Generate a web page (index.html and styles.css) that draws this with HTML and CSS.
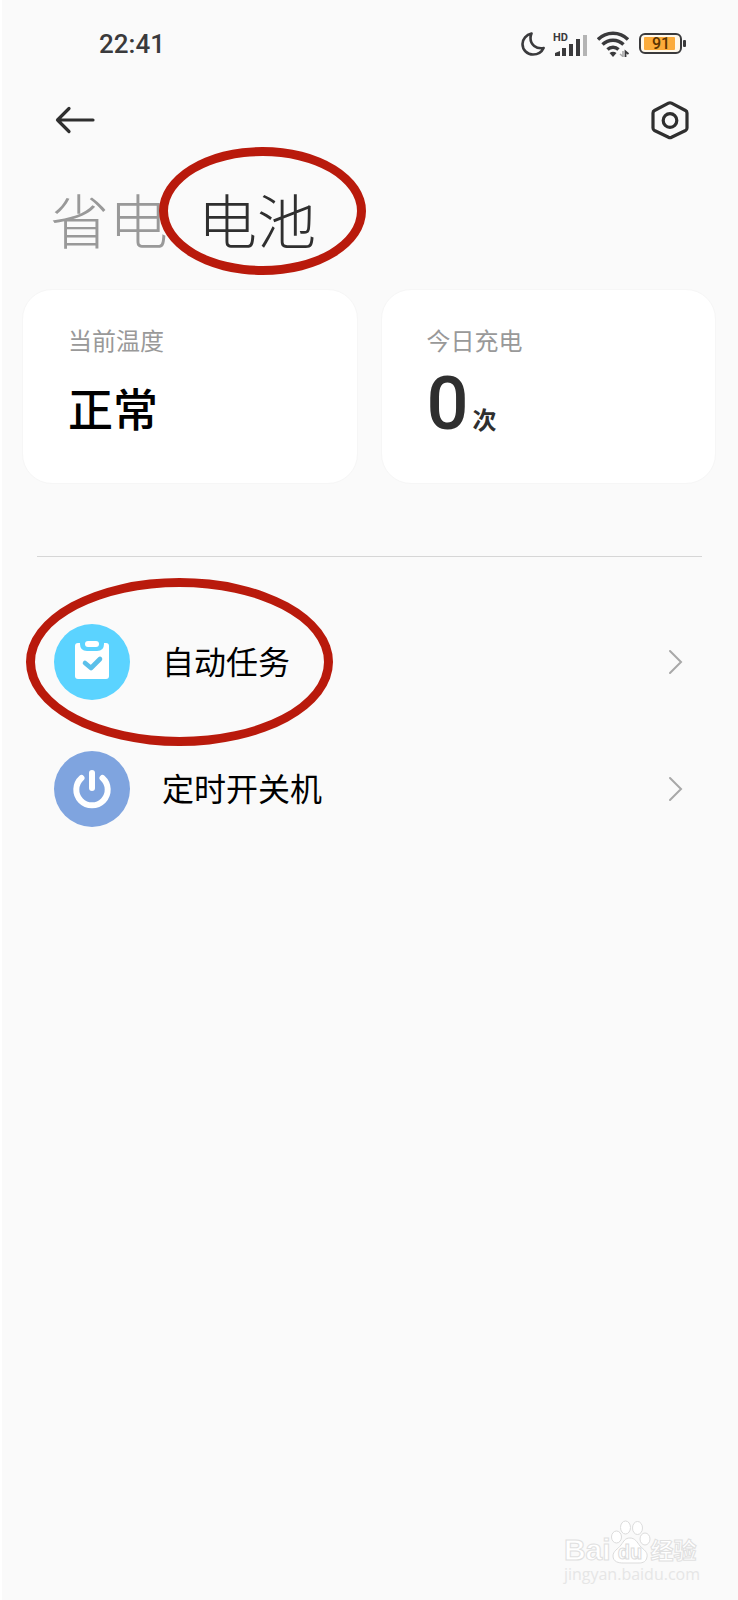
FILE: index.html
```html
<!DOCTYPE html>
<html lang="zh-CN">
<head>
  <meta charset="UTF-8">
  <meta name="viewport" content="width=device-width, initial-scale=1.0">
  <title>电池</title>
  <link rel="stylesheet" href="styles.css">
</head>
<body>

  <div class="page">
    <!-- Status Bar -->
    <div class="status-bar">
      <span class="time">22:41</span>
      <div class="status-icons">
        <svg width="24" height="26" viewBox="0 0 24 26" fill="none" stroke="#3a3a3c" stroke-width="2.6" stroke-linejoin="round">
          <path d="M10.500 2.500C5.300 3.600 1.500 8 1.500 13c0 6 4.700 10.500 10.500 10.500 4.700 0 8.700-2.300 10.600-6.500-7.600 1.300-13.100-3.500-13.100-10 0-1.600.4-3.100 1-4.500z"/>
        </svg>
        <svg width="36" height="30" viewBox="0 -2 36 30">
          <text class="hd" x="0" y="10">HD</text>
          <g fill="#3a3a3c">
            <path d="M2 25v-3l5-2v5z"/>
            <rect x="9" y="17" width="4" height="8"/>
            <rect x="16" y="13" width="4" height="12"/>
            <rect x="23" y="8" width="4" height="17"/>
          </g>
          <rect x="30" y="4" width="4" height="21" fill="#b4b4b4"/>
        </svg>
        <svg width="34" height="26" viewBox="0 0 34 26">
          <g fill="none" stroke="#3a3a3c" stroke-width="3.400">
            <path d="M1 8.500a21 21 0 0 1 30 0"/>
            <path d="M5.500 13.500a15 15 0 0 1 21 0"/>
            <path d="M10.500 18.500a8 8 0 0 1 11 0"/>
          </g>
          <path d="M12.500 22q3.500-2.400 7 0l-3.500 4z" fill="#3a3a3c"/>
          <path d="M26 20v5.500l-3-2.500" fill="none" stroke="#aaa" stroke-width="1.600"/>
          <path d="M28.500 26v-5.500l3 2.500" fill="none" stroke="#3a3a3c" stroke-width="1.800"/>
        </svg>
        <svg width="48" height="24" viewBox="0 0 48 24">
          <rect x="1" y="2" width="41" height="19" rx="5" fill="#fff8ea" stroke="#3a3a3c" stroke-width="2"/>
          <rect x="5" y="5" width="31" height="13" rx="1" fill="#fbab3a"/>
          <rect x="44" y="8" width="3" height="7" rx="1" fill="#3a3a3c"/>
          <text class="battery-level" x="22" y="17" text-anchor="middle">91</text>
        </svg>
      </div>
    </div>

    <!-- Toolbar -->
    <div class="toolbar">
      <button class="icon-button" aria-label="返回">
        <svg width="40" height="40" viewBox="0 0 40 40" fill="none" stroke="#2f2f2f" stroke-width="3.200" stroke-linecap="round" stroke-linejoin="round">
          <path d="M38 20H2.500M14 8.500L2.500 20 14 31.500"/>
        </svg>
      </button>
      <button class="icon-button" aria-label="设置">
        <svg width="40" height="40" viewBox="0 0 40 40" fill="none" stroke="#2f2f2f" stroke-width="3.200" stroke-linejoin="round">
          <path d="M18.500 3.200q1.500-.8 3 0L35.500 10.500q1.500.8 1.500 2.500V28q0 1.700-1.500 2.500L21.500 37.300q-1.500.8-3 0L4.500 30.500Q3 29.700 3 28V13q0-1.700 1.500-2.500z"/>
          <circle cx="20" cy="20.500" r="6.800"/>
        </svg>
      </button>
    </div>

    <!-- Tabs -->
    <div class="tabs">
      <button class="tab">省电</button>
      <button class="tab active">电池<span class="ring ring-tab"></span></button>
    </div>

    <!-- Battery Info -->
    <div class="cards">
      <div class="card">
        <div class="label">当前温度</div>
        <div class="value">正常</div>
      </div>
      <div class="card">
        <div class="label">今日充电</div>
        <div class="value count"><span class="number">0</span><span class="unit">次</span></div>
      </div>
    </div>

    <!-- Settings List -->
    <div class="list">
      <a class="item" href="#">
        <svg class="item-icon" viewBox="0 0 76 76">
          <circle cx="38" cy="38" r="38" fill="#5bd3ff"/>
          <path d="M24 19h28a3 3 0 0 1 3 3v30a3 3 0 0 1-3 3H24a3 3 0 0 1-3-3V22a3 3 0 0 1 3-3z" fill="#fff"/>
          <path d="M26 17v3q0 7 7 7h10q7 0 7-7v-3z" fill="#5bd3ff"/>
          <rect x="31" y="17" width="14" height="6" rx="3" fill="#fff"/>
          <path d="M31 39l6 5 9-9" fill="none" stroke="#5bc0ea" stroke-width="4.600" stroke-linecap="round" stroke-linejoin="round"/>
        </svg>
        <span class="item-name">自动任务</span>
        <svg class="arrow" viewBox="0 0 16 26"><path d="M2 2l11 11L2 24"/></svg>
        <span class="ring ring-item"></span>
      </a>
      <a class="item" href="#">
        <svg class="item-icon" viewBox="0 0 76 76">
          <circle cx="38" cy="38" r="38" fill="#7fa4df"/>
          <g fill="none" stroke="#fff" stroke-width="6" stroke-linecap="round">
            <path d="M27.500 27a15.700 15.700 0 1 0 21 0"/>
            <path d="M38 22v15"/>
          </g>
        </svg>
        <span class="item-name">定时开关机</span>
        <svg class="arrow" viewBox="0 0 16 26"><path d="M2 2l11 11L2 24"/></svg>
      </a>
    </div>

    <!-- Watermark -->
    <div class="watermark">
      <div class="brand">
        <span class="brand-name">Bai</span>
        <svg width="40" height="44" viewBox="0 0 40 44" fill="#fff" stroke="#dcdcdc">
          <ellipse cx="5.500" cy="17" rx="5" ry="6"/>
          <ellipse cx="14.500" cy="7.500" rx="5" ry="6.500"/>
          <ellipse cx="26.500" cy="8" rx="5" ry="6.500"/>
          <ellipse cx="34" cy="19" rx="5" ry="6"/>
          <path d="M19 18c5 0 7 4 10 8 4 4 8 6 7 11-1 6-6 6-9 6H12c-4 0-10-1-10-7 0-5 5-7 8-11s4-7 9-7z"/>
          <text class="du" x="19" y="39" text-anchor="middle">du</text>
        </svg>
        <span class="brand-sub">经验</span>
      </div>
      <div class="site">jingyan.baidu.com</div>
    </div>
  </div>

</body>
</html>
```

FILE: styles.css
```css
* {
  box-sizing: border-box;
}

body {
  font-family: Roboto, "Noto Sans CJK SC", sans-serif;
  background-color: #fafafa;
  color: #000;
  margin: 0;
}

button {
  font-family: inherit;
  border: none;
  background: none;
  padding: 0;
  cursor: pointer;
}

svg {
  display: block;
  flex-shrink: 0;
}

.page {
  display: flex;
  flex-direction: column;
  min-height: 100vh;
  border-left: 2px solid #fff;
}

/* Status Bar */
.status-bar {
  display: flex;
  justify-content: space-between;
  align-items: center;
  height: 88px;
  padding: 0 51px 0 97px;
}

.time {
  font-size: 26px;
  font-weight: 500;
  color: #3a3a3c;
}

.status-icons {
  display: flex;
  align-items: center;
  gap: 8px;
}

.hd {
  font-size: 11px;
  font-weight: 700;
  fill: #3a3a3c;
}

.battery-level {
  font-size: 16px;
  font-weight: 500;
  fill: #5a3300;
}

/* Toolbar */
.toolbar {
  display: flex;
  justify-content: space-between;
  padding: 12px 48px 0 53px;
}

/* Tabs */
.tabs {
  display: flex;
  gap: 30px;
  padding: 35px 48px 0;
}

.tab {
  position: relative;
  font-size: 59px;
  font-weight: 300;
  line-height: 88px;
  font-family: "Noto Sans CJK SC", sans-serif;
  color: #999;
}

.tab.active {
  color: #2f2f2f;
}

/* Hand-drawn style highlight rings */
.ring {
  position: absolute;
  border: 9px solid #b91a0c;
  border-radius: 50%;
  pointer-events: none;
}

.ring-tab {
  top: -28px;
  left: -39px;
  width: 207px;
  height: 128px;
}

.ring-item {
  top: -46px;
  left: -28px;
  width: 307px;
  height: 168px;
}

/* Cards */
.cards {
  display: grid;
  grid-template-columns: 1fr 1fr;
  gap: 23px;
  padding: 26px 22px 0 20px;
}

.card {
  height: 195px;
  padding: 36px 45px;
  background-color: #fff;
  border: 1px solid #f6f6f6;
  border-radius: 30px;
}

.label {
  font-size: 24px;
  line-height: 32px;
  color: #999;
}

.value {
  font-size: 45px;
  font-weight: 500;
  line-height: 64px;
  margin-top: 22px;
}

.count {
  display: flex;
  align-items: baseline;
  gap: 4px;
  margin-top: 14px;
}

.number {
  font-size: 74px;
  color: #2f2f2f;
}

.unit {
  font-size: 24px;
  font-weight: 700;
  color: #2f2f2f;
}

/* Settings List */
.list {
  display: flex;
  flex-direction: column;
  gap: 51px;
  margin: 72px 36px 0 35px;
  padding: 67px 18px 0 17px;
  border-top: 1px solid #d6d6d6;
}

.item {
  position: relative;
  display: flex;
  align-items: center;
  color: #000;
  text-decoration: none;
}

.item-icon {
  width: 76px;
  height: 76px;
}

.item-name {
  flex: 1;
  margin-left: 32px;
  padding-top: 2px;
  font-size: 32px;
  line-height: 48px;
}

.arrow {
  width: 16px;
  height: 26px;
  fill: none;
  stroke: #a8a8a8;
  stroke-width: 2;
  stroke-linecap: round;
}

/* Watermark */
.watermark {
  align-self: flex-end;
  margin-top: auto;
  padding: 0 38px 16px 0;
  font-family: "Liberation Sans", "Noto Sans CJK SC", sans-serif;
  color: #fff;
}

.brand {
  display: flex;
  align-items: flex-end;
  -webkit-text-stroke: 1px #e0e0e0;
}

.brand-name {
  font-size: 30px;
  font-weight: 700;
  line-height: 28px;
}

.brand-sub {
  font-size: 23px;
  font-weight: 700;
  line-height: 26px;
}

.du {
  font-size: 20px;
  font-weight: 700;
}

.site {
  font-family: "Open Sans", sans-serif;
  font-size: 16px;
  line-height: 20px;
  color: #e6e6e6;
}
```
